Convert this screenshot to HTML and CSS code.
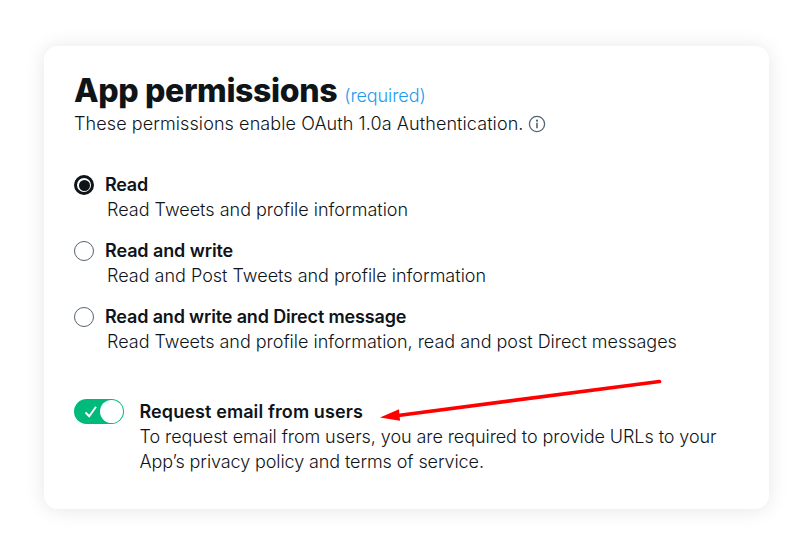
FILE: index.html
```html
<!DOCTYPE html>
<html lang="en">
<head>
<meta charset="utf-8">
<title>App permissions</title>
<link rel="stylesheet" href="styles.css">
</head>
<body>
<main class="card">
  <header class="head">
    <h1><span class="fit title">App permissions</span></h1>
    <span class="fit required">(required)</span>
  </header>
  <p class="intro"><span class="fit intro-text">These permissions enable OAuth 1.0a Authentication.</span>
    <svg class="info" viewBox="0 0 18 18"><circle cx="9" cy="9" r="7.6" fill="none" stroke="#536471" stroke-width="1.3"/><circle cx="9" cy="5.7" r="1.1" fill="#536471"/><path d="M9 7.8v5.4" fill="none" stroke="#536471" stroke-width="1.6"/></svg>
  </p>
  <div class="options">
    <div class="option"><span class="radio on"></span><div><h2><span class="fit o1">Read</span></h2><p><span class="fit d1">Read Tweets and profile information</span></p></div></div>
    <div class="option"><span class="radio"></span><div><h2><span class="fit o2">Read and write</span></h2><p><span class="fit d2">Read and Post Tweets and profile information</span></p></div></div>
    <div class="option"><span class="radio"></span><div><h2><span class="fit o3">Read and write and Direct message</span></h2><p><span class="fit d3">Read Tweets and profile information, read and post Direct messages</span></p></div></div>
  </div>
  <div class="email">
    <span class="toggle"><svg viewBox="0 0 14 14"><path d="M1.500 7.500l3.700 3.700L12 1.800" fill="none" stroke="#fff" stroke-width="1.900"/></svg><i></i></span>
    <div><h2><span class="fit o4">Request email from users</span></h2><p><span class="fit d4">To request email from users, you are required to provide URLs to your</span><br><span class="fit d5">App’s privacy policy and terms of service.</span></p></div>
  </div>
  <svg class="arrow" viewBox="0 0 284 46"><path d="M279.500 6.500L18 40.500" stroke="#ff0000" stroke-width="3.700" stroke-linecap="round"/><path d="M0 42.500L19 34.200L20 45.800Z" fill="#ff0000"/></svg>
</main>
</body>
</html>
```
FILE: styles.css
```css
* { box-sizing: border-box; }
body { margin: 0; padding: 46px 40px 40px 44px; height: 549px; background: #fff; color: #0f1419; font-family: Inter, "Liberation Sans", sans-serif; font-size: 18px; font-weight: 350; }
h1, h2, p { margin: 0; }
.card { position: relative; height: 463px; padding: 26px 30px; border-radius: 14px; background: #fff; box-shadow: 0 1px 20px rgba(0,0,0,.1); }
.fit { display: inline-block; white-space: nowrap; }
.head { display: flex; align-items: baseline; gap: 7px; height: 39px; }
h1 { font-size: 32px; line-height: 38px; font-weight: 800; letter-spacing: -.36px; }
.required { color: #1d9bf0; font-size: 18px; letter-spacing: -.08px; }
.intro { display: flex; align-items: center; gap: 4px; height: 25px; letter-spacing: .09px; }
.info { width: 18px; height: 18px; }
.options { margin-top: 36px; display: grid; gap: 16px; }
.option { display: flex; gap: 11px; height: 50px; }
h2 { font-size: 18px; line-height: 25px; font-weight: 600; }
p { line-height: 25px; }
.option p { padding-left: 2px; }
.o1 { letter-spacing: -.25px; }
.o2 { letter-spacing: -.1px; }
.o3 { letter-spacing: -.16px; }
.o4 { letter-spacing: .1px; }
.d1 { letter-spacing: 0; }
.d2 { letter-spacing: 0; }
.d3 { letter-spacing: -.015px; }
.d4 { letter-spacing: -.075px; }
.d5 { letter-spacing: -.1px; }
.radio { width: 20px; height: 20px; margin-top: 3px; border: 1px solid #536471; border-radius: 50%; }
.radio.on { border: 3px solid #0f1419; padding: 1.5px; }
.radio.on::before { content: ""; display: block; height: 11px; border-radius: 50%; background: #0f1419; }
.email { display: flex; gap: 15.5px; margin-top: 45px; }
.toggle { display: flex; align-items: center; justify-content: space-between; width: 50px; height: 25px; padding: 0 1px 0 10px; border-radius: 13px; background: #00ba7c; }
.toggle svg { width: 14px; height: 14px; }
.toggle i { width: 23px; height: 23px; border-radius: 50%; background: #fff; }
.arrow { position: absolute; left: 336px; top: 329px; width: 284px; height: 46px; overflow: visible; }
```
